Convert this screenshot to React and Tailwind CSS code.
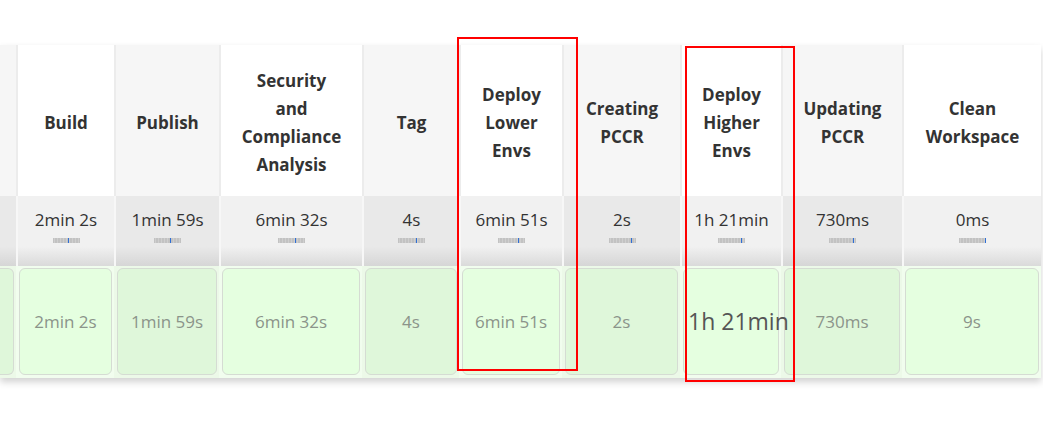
import React from "react";

const stages = [
  { lines: [""], w: "w-[16px]", shade: true, avg: "", run: "", tick: 0, partial: true },
  { lines: ["Build"], w: "w-[98px]", shade: false, avg: "2min 2s", run: "2min 2s", tick: 15 },
  { lines: ["Publish"], w: "w-[105px]", shade: true, avg: "1min 59s", run: "1min 59s", tick: 16 },
  { lines: ["Security", "and", "Compliance", "Analysis"], w: "w-[143px]", shade: false, avg: "6min 32s", run: "6min 32s", tick: 17 },
  { lines: ["Tag"], w: "w-[97px]", shade: true, avg: "4s", run: "4s", tick: 18 },
  { lines: ["Deploy", "Lower", "Envs"], w: "w-[103px]", shade: false, avg: "6min 51s", run: "6min 51s", tick: 20 },
  { lines: ["Creating", "PCCR"], w: "w-[118px]", shade: true, avg: "2s", run: "2s", tick: 22 },
  { lines: ["Deploy", "Higher", "Envs"], w: "w-[101px]", shade: false, avg: "1h 21min", run: "1h 21min", tick: 23, big: true },
  { lines: ["Updating", "PCCR"], w: "w-[121px]", shade: true, avg: "730ms", run: "730ms", tick: 24 },
  { lines: ["Clean", "Workspace"], w: "w-[139px]", shade: false, avg: "0ms", run: "9s", tick: 26 },
];

function MiniBar({ tick }) {
  const stripes = [];
  for (let i = 1; i < 27; i += 3) {
    stripes.push(<rect key={i} x={i} y="0" width="1" height="5" fill="#cfcfcf" />);
  }
  return (
    <svg width="27" height="5" viewBox="0 0 27 5" className="block">
      <rect x="0" y="0" width="27" height="5" fill="#c2c2c2" />
      {stripes}
      <rect x={tick} y="0" width="1" height="5" fill="#2f6fd6" />
    </svg>
  );
}

export default function App() {
  return (
    <div className="relative w-[1043px] h-[427px] bg-white overflow-hidden font-['Open_Sans',sans-serif]">
      <div className="pt-[45px]">
        <div className="inline-block shadow-[0_4px_7px_rgba(0,0,0,0.18)]">
          {/* header row */}
          <div className="flex h-[151px]">
            {stages.map((s, i) => (
              <div
                key={"h" + i}
                className={`${s.w} shrink-0 flex flex-col items-center justify-center pt-[4px] ${i > 0 ? "border-l-2 border-[#ececec]" : ""} ${s.shade ? "bg-[#f6f6f6]" : "bg-white"}`}
              >
                {s.lines.map((l, j) => (
                  <span key={j} className="text-[17px] leading-[28px] font-bold text-[#333] whitespace-nowrap">
                    {l}
                  </span>
                ))}
              </div>
            ))}
          </div>

          {/* averages row */}
          <div className="flex h-[70px]">
            {stages.map((s, i) => (
              <div
                key={"a" + i}
                className={`${s.w} shrink-0 flex flex-col items-center pt-[12px] ${i > 0 ? "border-l-2 border-[#f7f7f7]" : ""} ${
                  s.shade
                    ? "bg-[linear-gradient(to_bottom,#e9e9e9_0%,#e9e9e9_72%,#d6d6d6_100%)]"
                    : "bg-[linear-gradient(to_bottom,#f1f1f1_0%,#f1f1f1_72%,#dadada_100%)]"
                }`}
              >
                {!s.partial && (
                  <>
                    <span className="text-[17px] leading-[24px] text-[#333] whitespace-nowrap">{s.avg}</span>
                    <div className="mt-[6px]">
                      <MiniBar tick={s.tick} />
                    </div>
                  </>
                )}
              </div>
            ))}
          </div>

          {/* run row */}
          <div className="flex h-[112px]">
            {stages.map((s, i) => (
              <div
                key={"r" + i}
                className={`${s.w} shrink-0 ${i > 0 ? "pl-[3px]" : ""} pr-[2px] pt-[2px] pb-[3px] ${s.big ? "relative z-10" : ""} ${s.shade ? "bg-[#ecf9e8]" : "bg-[#f1fdee]"}`}
              >
                <div
                  className={`h-full flex items-center border border-[#d5dcd3] ${i === 0 ? "rounded-r-[6px] border-l-0" : "rounded-[6px]"} ${
                    s.shade ? "bg-[#dff7da]" : "bg-[#e5ffe0]"
                  }`}
                >
                  {!s.partial && (
                    <div className={`w-full text-center ${s.big ? "pl-[4px] text-left" : "px-[4px]"}`}>
                      <span
                        className={
                          s.big
                            ? "text-[23px] text-[#555] whitespace-nowrap"
                            : "text-[17px] text-[#8b948a] whitespace-nowrap"
                        }
                      >
                        {s.run}
                      </span>
                    </div>
                  )}
                </div>
              </div>
            ))}
          </div>
        </div>
      </div>

      {/* annotation boxes */}
      <div className="absolute left-[457px] top-[37px] w-[121px] h-[334px] border-2 border-[#ff0000] z-20" />
      <div className="absolute left-[685px] top-[46px] w-[110px] h-[336px] border-2 border-[#ff0000] z-20" />
    </div>
  );
}
